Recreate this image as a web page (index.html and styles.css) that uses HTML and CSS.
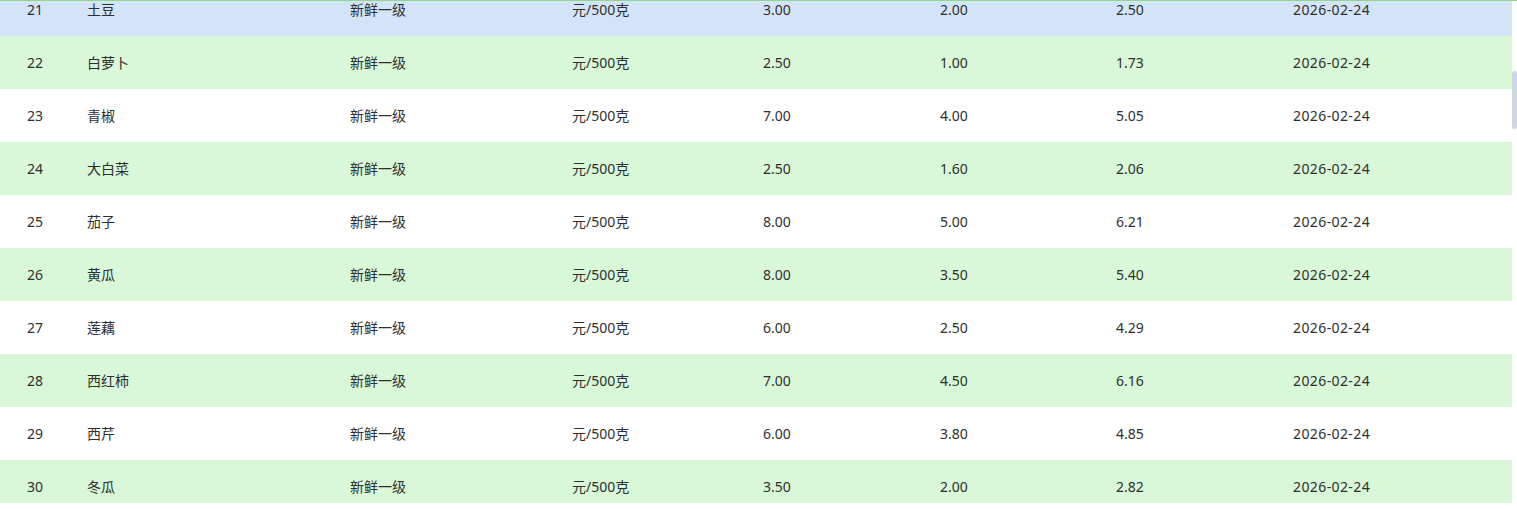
FILE: index.html
```html
<!DOCTYPE html>
<html lang="zh">
<head>
<meta charset="utf-8">
<link rel="stylesheet" href="styles.css">
</head>
<body>
<div class="viewport">
  <div class="scroller">
    <table class="grid">
      <colgroup>
        <col class="c-no"><col class="c-name"><col class="c-grade"><col class="c-unit"><col class="c-max"><col class="c-min"><col class="c-avg"><col class="c-date">
      </colgroup>
      <tbody>
        <tr class="hl"><td>21</td><td>土豆</td><td>新鲜一级</td><td>元/500克</td><td>3.00</td><td>2.00</td><td>2.50</td><td>2026-02-24</td></tr>
        <tr class="alt"><td>22</td><td>白萝卜</td><td>新鲜一级</td><td>元/500克</td><td>2.50</td><td>1.00</td><td>1.73</td><td>2026-02-24</td></tr>
        <tr><td>23</td><td>青椒</td><td>新鲜一级</td><td>元/500克</td><td>7.00</td><td>4.00</td><td>5.05</td><td>2026-02-24</td></tr>
        <tr class="alt"><td>24</td><td>大白菜</td><td>新鲜一级</td><td>元/500克</td><td>2.50</td><td>1.60</td><td>2.06</td><td>2026-02-24</td></tr>
        <tr><td>25</td><td>茄子</td><td>新鲜一级</td><td>元/500克</td><td>8.00</td><td>5.00</td><td>6.21</td><td>2026-02-24</td></tr>
        <tr class="alt"><td>26</td><td>黄瓜</td><td>新鲜一级</td><td>元/500克</td><td>8.00</td><td>3.50</td><td>5.40</td><td>2026-02-24</td></tr>
        <tr><td>27</td><td>莲藕</td><td>新鲜一级</td><td>元/500克</td><td>6.00</td><td>2.50</td><td>4.29</td><td>2026-02-24</td></tr>
        <tr class="alt"><td>28</td><td>西红柿</td><td>新鲜一级</td><td>元/500克</td><td>7.00</td><td>4.50</td><td>6.16</td><td>2026-02-24</td></tr>
        <tr><td>29</td><td>西芹</td><td>新鲜一级</td><td>元/500克</td><td>6.00</td><td>3.80</td><td>4.85</td><td>2026-02-24</td></tr>
        <tr class="alt"><td>30</td><td>冬瓜</td><td>新鲜一级</td><td>元/500克</td><td>3.50</td><td>2.00</td><td>2.82</td><td>2026-02-24</td></tr>
      </tbody>
    </table>
  </div>
  <div class="thumb"></div>
</div>
</body>
</html>
```
FILE: styles.css
```css
html, body {
  margin: 0;
  padding: 0;
  background: #ffffff;
}
body {
  font-family: "Noto Sans", "Noto Sans CJK SC", sans-serif;
  font-size: 14px;
  color: #2f2f2f;
}
.viewport {
  position: relative;
  width: 1517px;
  height: 503px;
  overflow: hidden;
  border-top: 1px solid #8fd68f;
  box-sizing: border-box;
}
.scroller {
  width: 1512px;
  height: 100%;
  overflow: hidden;
}
.grid {
  width: 1512px;
  border-collapse: collapse;
  table-layout: fixed;
  margin-top: -18px;
}
.grid td {
  height: 53px;
  padding: 0;
  vertical-align: middle;
  white-space: nowrap;
  line-height: 20px;
}
.grid tr { background: #ffffff; }
.grid tr.alt { background: #d8f8d8; }
.grid tr.hl { background: #d4e4f8; }
.c-no { width: 87px; }
.c-name { width: 263px; }
.c-grade { width: 222px; }
.c-unit { width: 191px; }
.c-max { width: 177px; }
.c-min { width: 176px; }
.c-avg { width: 177px; }
.c-date { width: 219px; }
.grid td:first-child { padding-left: 27px; }
.grid td:last-child { letter-spacing: 0.4px; }
.thumb {
  position: absolute;
  right: 0;
  top: 70px;
  width: 5px;
  height: 58px;
  border-radius: 3px;
  background: #d0d6e0;
}
```
